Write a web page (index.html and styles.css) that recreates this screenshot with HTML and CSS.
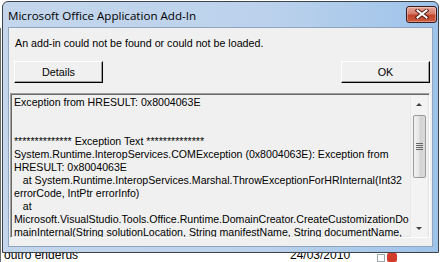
FILE: index.html
```html
<!DOCTYPE html>
<html>
<head>
<meta charset="utf-8">
<link rel="stylesheet" href="styles.css">
</head>
<body>
<div class="bg">
  <div class="edge"></div>
  <div class="window">
    <div class="titlebar">
      <span class="title">Microsoft Office Application Add-In</span>
      <div class="close">
        <svg width="14" height="10" viewBox="0 0 14 10"><path d="M2.5 1.5 L11.5 8.5 M11.5 1.5 L2.5 8.5" stroke="#4a1410" stroke-width="3.8" stroke-linecap="square"/><path d="M2.5 1.5 L11.5 8.5 M11.5 1.5 L2.5 8.5" stroke="#fff" stroke-width="2" stroke-linecap="square"/></svg>
      </div>
    </div>
    <div class="client">
      <p class="msg">An add-in could not be found or could not be loaded.</p>
      <div class="buttons">
        <div class="btn">Details</div>
        <div class="btn">OK</div>
      </div>
      <div class="details">
        <div class="text">Exception from HRESULT: 0x8004063E


************** Exception Text **************
System.Runtime.InteropServices.COMException (0x8004063E): Exception from
HRESULT: 0x8004063E
   at System.Runtime.InteropServices.Marshal.ThrowExceptionForHRInternal(Int32
errorCode, IntPtr errorInfo)
   at
Microsoft.VisualStudio.Tools.Office.Runtime.DomainCreator.CreateCustomizationDo
mainInternal(String solutionLocation, String manifestName, String documentName,</div>
        <div class="scrollbar">
          <div class="arrow up"></div>
          <div class="thumb"><span></span><span></span><span></span><span></span></div>
          <div class="track"></div>
          <div class="arrow down"></div>
        </div>
      </div>
    </div>
  </div>
  <div class="behind">
    <span class="b1">outro enderus</span>
    <span class="b2">24/03/2010</span>
    <span class="b3"></span>
    <span class="b4"></span>
  </div>
</div>
</body>
</html>
```
FILE: styles.css
```css
* { box-sizing: border-box; }
html, body { margin: 0; padding: 0; }
body { background: #ffffff; width: 443px; height: 262px; overflow: hidden; font-family: "Liberation Sans", Arial, sans-serif; }
.bg { position: relative; width: 443px; height: 262px; }
.edge {
  position: absolute;
  left: 0;
  top: 27px;
  width: 1px;
  height: 235px;
  background: #6b6b6b;
}
.window {
  margin: 1px 0 0 2px;
  width: 437px;
  height: 252px;
  border: 1px solid #404448;
  border-radius: 6px 6px 0 0;
  background: linear-gradient(to right, #c3d6ec 0%, #bcd2ec 60%, #9ec3ea 100%);
  display: flex;
  flex-direction: column;
  padding: 0 5px 5px 5px;
}
.titlebar {
  height: 25px;
  display: flex;
  align-items: center;
  justify-content: space-between;
  flex: none;
}
.title {
  font-family: "Open Sans", "Noto Sans", sans-serif;
  font-size: 11.6px;
  color: #000;
  padding-top: 2px;
}
.close {
  width: 31px;
  height: 17px;
  margin-top: -1px;
  margin-right: -4px;
  border: 1px solid #3d1a1a;
  border-radius: 3px;
  background: linear-gradient(to bottom, #e8a496 0%, #d57b69 45%, #c1452c 55%, #cc5a3c 100%);
  display: flex;
  align-items: center;
  justify-content: center;
  box-shadow: inset 0 0 0 1px rgba(255,255,255,0.35);
}
.close svg { display: block; }
.client {
  flex: 1;
  background: #f0f0f0;
  border: 1px solid #8ea4bf;
  padding: 0 1px;
  display: flex;
  flex-direction: column;
  font-size: 10.7px;
}
.msg { margin: 9px 0 0 5px; height: 13px; line-height: 13px; }
.buttons {
  display: flex;
  justify-content: space-between;
  margin: 11px 1px 0 4px;
}
.btn {
  width: 89px;
  height: 22px;
  background: #f0f0f0;
  border-style: solid;
  border-width: 1px;
  border-color: #fff #000 #000 #fff;
  box-shadow: inset -1px -1px 0 #a0a0a0;
  display: flex;
  align-items: center;
  justify-content: center;
  font-size: 10.8px;
}
.details {
  margin-top: 10px;
  height: 145px;
  width: 420px;
  border-style: solid;
  border-width: 1px;
  border-color: #a0a0a0 #fff #fff #a0a0a0;
  box-shadow: inset 1px 1px 0 #696969, inset -1px -1px 0 #e3e3e3;
  background: #f0f0f0;
  display: flex;
  padding: 2px 2px 0 2px;
  overflow: hidden;
}
.text {
  flex: 1;
  white-space: pre;
  overflow: hidden;
  padding: 0 0 0 1px;
  line-height: 13px;
  font-size: 10.6px;
  color: #000;
}
.scrollbar {
  width: 17px;
  height: 141px;
  display: flex;
  flex-direction: column;
  background: #f3f3f3;
  border-left: 1px solid #e8e8e8;
  flex: none;
}
.arrow { height: 17px; position: relative; flex: none; }
.arrow::after {
  content: "";
  position: absolute;
  left: 5px;
  border-left: 3px solid transparent;
  border-right: 3px solid transparent;
}
.arrow.up::after { top: 7px; border-bottom: 3px solid #404040; }
.arrow.down::after { top: 7px; border-top: 3px solid #404040; }
.thumb {
  height: 63px;
  margin: 2px 1px 0 2px;
  border: 1px solid #9a9a9a;
  border-radius: 2px;
  background: linear-gradient(to right, #f3f3f3 0%, #e4e4e4 45%, #d3d3d3 55%, #dadada 100%);
  display: flex;
  flex-direction: column;
  align-items: center;
  justify-content: center;
  gap: 1px;
  flex: none;
}
.thumb span { display: block; width: 7px; height: 1px; background: #666; }
.track { flex: 1; }
.behind {
  height: 9px;
  overflow: hidden;
  position: relative;
  font-size: 12px;
}
.behind span { position: absolute; top: -5px; line-height: 14px; }
.b1 { left: 4px; }
.b2 { left: 290px; }
.b3 { left: 377px; top: 1px !important; width: 8px; height: 8px; border: 1px solid #9aa; background: #fff; }
.b4 { left: 387px; top: 0 !important; width: 10px; height: 9px; background: #d23a2a; border-radius: 2px; }
```
